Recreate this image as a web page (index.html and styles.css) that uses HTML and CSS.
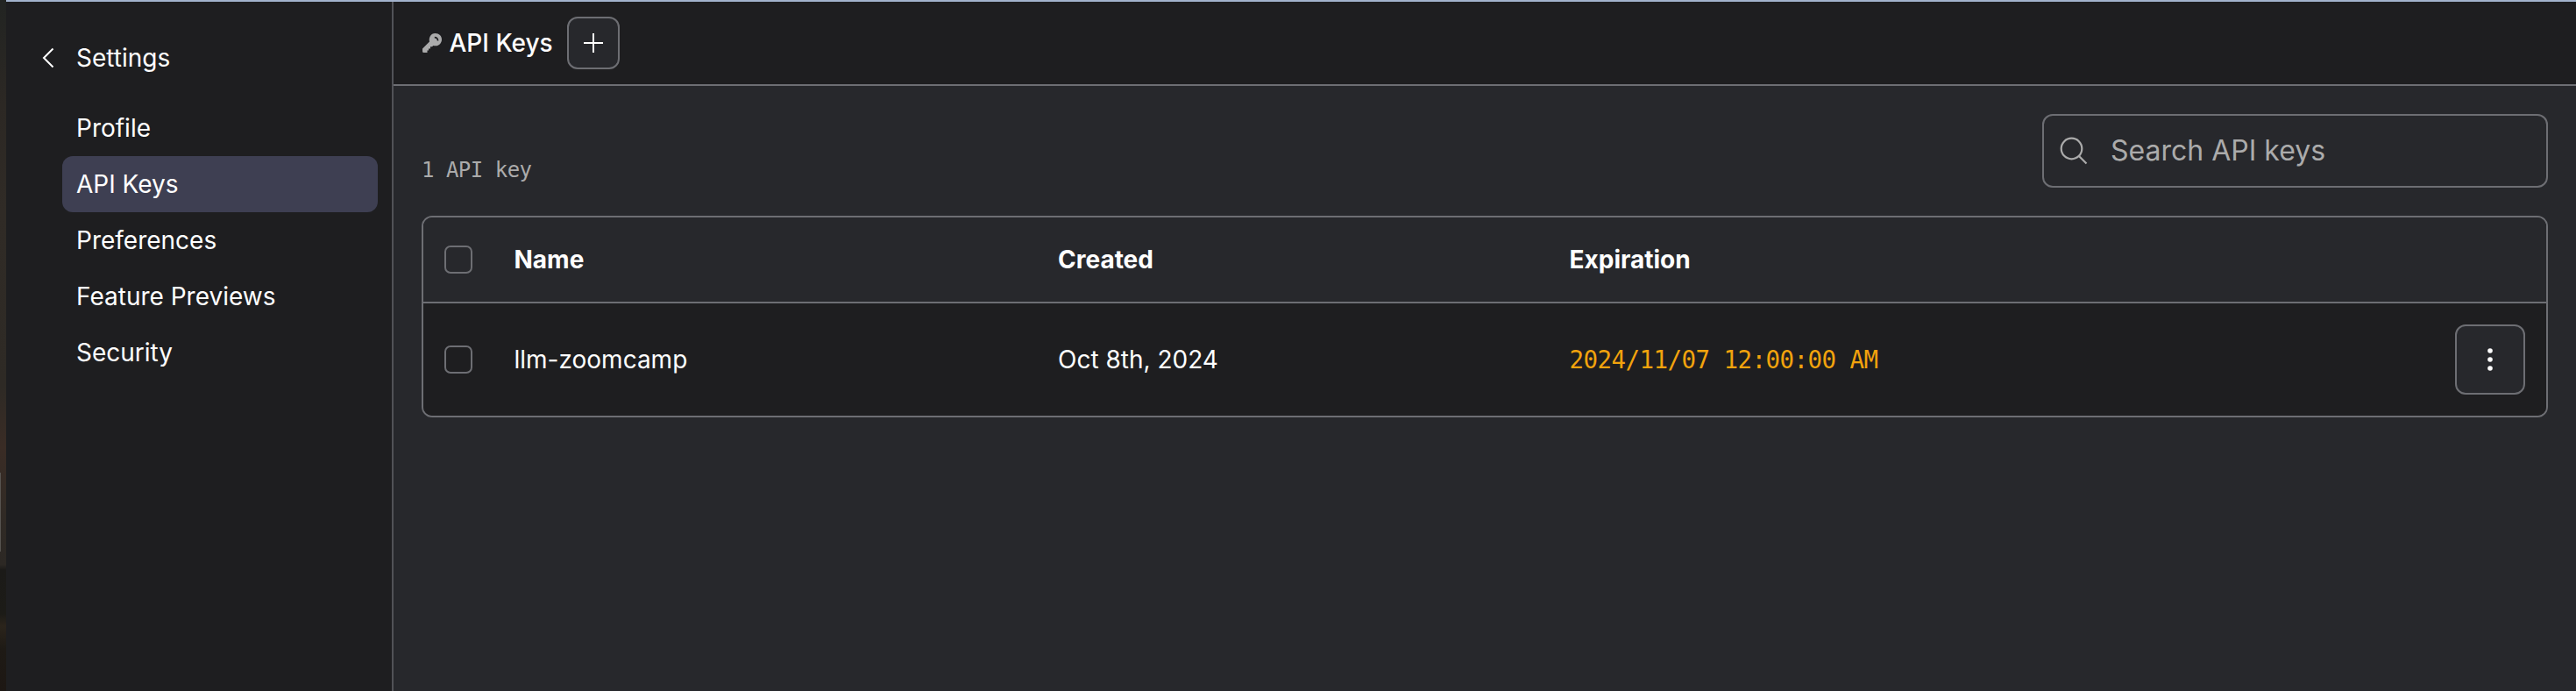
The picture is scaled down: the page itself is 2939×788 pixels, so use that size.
FILE: index.html
```
<!DOCTYPE html>
<html lang="en">
<head>
<meta charset="utf-8">
<title>API Keys</title>
<link rel="stylesheet" href="styles.css">
</head>
<body>
<div class="desktop-edge"><div class="edge-light"></div></div>
<div class="window">
  <nav class="sidebar">
    <a class="back">
      <svg class="back-icon" viewBox="0 0 16 24" fill="none" stroke="currentColor" stroke-width="2"><path d="M13.500 1.500 3 12l10.500 10.500"/></svg>
      <span>Settings</span>
    </a>
    <div class="menu">
      <a class="item">Profile</a>
      <a class="item active">API Keys</a>
      <a class="item">Preferences</a>
      <a class="item">Feature Previews</a>
      <a class="item">Security</a>
    </div>
  </nav>
  <main class="main">
    <header class="header">
      <svg class="key-icon" viewBox="0 0 22 22"><path fill="#ababab" fill-rule="evenodd" d="M14.5 0C19 0 22 3 22 7s-3 7.300-7 7.300c-1 0-1.800-.1-2.600-.4L11 15.300H9v2.200H7v2H5.500V22H1.500Q0 22 0 20.500V17.500L8 9.500C7 5 9.500 0 14.500 0ZM13.800 3.800v1.600c1.800 0 3 1.200 3 3h1.600c0-2.700-1.900-4.600-4.600-4.600Z"/></svg>
      <h1 class="title">API Keys</h1>
      <button class="square add"><svg class="plus" viewBox="0 0 22 22" stroke="currentColor" stroke-width="2"><path d="M11 0v22M0 11h22"/></svg></button>
    </header>
    <section class="content">
      <div class="toolbar">
        <span class="count">1 API key</span>
        <label class="search">
          <svg class="search-icon" viewBox="0 0 32 32" fill="none" stroke="currentColor" stroke-width="2.200"><circle cx="13.500" cy="13.500" r="11.800"/><path d="m22 22 8.500 8.500"/></svg>
          <span>Search API keys</span>
        </label>
      </div>
      <div class="table">
        <div class="row head">
          <span class="check"></span><span>Name</span><span>Created</span><span>Expiration</span><span></span>
        </div>
        <div class="row">
          <span class="check"></span><span>llm-zoomcamp</span><span>Oct 8th, 2024</span><span class="expired">2024/11/07 12:00:00 AM</span>
          <button class="square more"><svg class="dots" viewBox="0 0 6 26" fill="currentColor"><circle cx="3" cy="3" r="2.800"/><circle cx="3" cy="13" r="2.800"/><circle cx="3" cy="23" r="2.800"/></svg></button>
        </div>
      </div>
    </section>
  </main>
</div>
</body>
</html>
```
FILE: styles.css
```
* { box-sizing: border-box; }
body {
  margin: 0;
  height: 788px;
  display: flex;
  overflow: hidden;
  background: #1e1e20;
  color: #fff;
  font: 400 28px/40px Inter, sans-serif;
}
.desktop-edge {
  width: 7px;
  padding-top: 539px;
  background: linear-gradient(#222422 0, #2c2824 120px, #302b26 240px, #2e2a25 440px, #3a2c25 510px, #302a25 590px, #2c2824 644px, #1b1a18 650px, #1c1b17 700px, #2b241b 714px, #1e1a15 740px, #1d1713 788px);
}
.edge-light { width: 1px; height: 90px; background: #56534f; }
.window { flex: 1; display: flex; border-top: 2px solid #a3b3cd; }
.sidebar { width: 442px; border-right: 2px solid #515257; padding: 40px 16px 0 40px; }
.back { display: flex; align-items: center; height: 48px; }
.back-icon { width: 16px; height: 24px; margin-right: 24px; }
.menu { margin: 24px 0 0 24px; }
.item { display: flex; align-items: center; height: 64px; padding: 0 16px; border-radius: 12px; }
.active { background: #3e3f52; }
.main { flex: 1; background: #27282c; }
.header { display: flex; align-items: center; height: 96px; padding-left: 33px; background: #1e1e20; border-bottom: 2px solid #6d6e73; }
.key-icon { width: 22px; height: 22px; margin-right: 8.5px; }
.title { margin: 0; font-size: 28px; font-weight: 500; }
.square { display: flex; align-items: center; justify-content: center; padding: 0; border: 2px solid #6d6e73; border-radius: 12px; background: #27282c; color: #fff; }
.add { width: 60px; height: 60px; margin-left: 16.5px; }
.plus { width: 22px; height: 22px; }
.content { padding: 32px 32px 0; }
.toolbar { display: flex; justify-content: space-between; height: 84px; }
.count { margin-top: 44px; font: 24px/40px "DejaVu Sans Mono", monospace; letter-spacing: -0.5px; color: #ababab; }
.search { display: flex; align-items: center; gap: 26px; width: 577px; padding-left: 18px; border: 2px solid #6d6e73; border-radius: 12px; font-size: 32px; color: #ababab; }
.search-icon { width: 32px; height: 32px; }
.table { margin-top: 32px; border: 2px solid #6d6e73; border-radius: 12px; overflow: hidden; }
.row { display: grid; grid-template-columns: 79.5px 620.5px 583.5px 1fr 80px; align-items: center; height: 128px; padding: 0 24px; background: #1e1e20; }
.head { height: 98px; background: #27282c; border-bottom: 2px solid #6d6e73; font-weight: 700; }
.check { width: 32px; height: 32px; border: 2px solid #6d6e73; border-radius: 7px; }
.expired { font: 27.5px/40px "DejaVu Sans Mono", monospace; letter-spacing: -0.556px; color: #f2a30d; }
.more { width: 80px; height: 80px; }
.dots { width: 6px; height: 26px; }
```
